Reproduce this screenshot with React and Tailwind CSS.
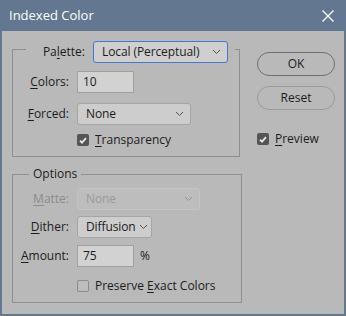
import React from 'react';

const font = { fontFamily: '"Open Sans", "Noto Sans", sans-serif' };

const Chevron = () => (
  <svg width="9" height="6" viewBox="0 0 9 6" className="shrink-0">
    <path d="M1 1l3.5 3.5L8 1" fill="none" stroke="#555" strokeWidth="1" />
  </svg>
);

const Select = ({ value, width, focused, disabled }) => (
  <div
    className={`h-[22px] flex items-center justify-between gap-[3px] pl-[8px] pr-[6px] rounded-[3px] border whitespace-nowrap ${
      focused ? 'border-[#3d7bd0] bg-[#cfcfcf]' : disabled ? 'border-[#c4c4c4] bg-[#bdbdbd]' : 'border-[#a5a5a5] bg-[#cdcdcd]'
    } ${disabled ? 'text-[#9a9a9a]' : 'text-[#1c1c1c]'}`}
    style={{ width }}
  >
    <span className="tracking-[-0.1px]">{value}</span>
    <span className={disabled ? 'opacity-40' : ''}><Chevron /></span>
  </div>
);

const Input = ({ value }) => (
  <div className="h-[22px] w-[57px] flex items-center pl-[5px] border border-[#a0a0a0] bg-[#d2d2d2] text-[#1c1c1c]">
    {value}
  </div>
);

const Check = ({ checked }) =>
  checked ? (
    <div className="w-[12px] h-[12px] rounded-[2px] bg-[#555555] flex items-center justify-center">
      <svg width="8" height="7" viewBox="0 0 8 7">
        <path d="M1 3.6l2 2L7 1.2" fill="none" stroke="#e8e8e8" strokeWidth="1.8" />
      </svg>
    </div>
  ) : (
    <div className="w-[12px] h-[12px] rounded-[2px] border border-[#8a8a8a] bg-[#bcbcbc]" />
  );

const Label = ({ pre, u, post, disabled }) => (
  <span className={`whitespace-nowrap ${disabled ? 'text-[#8c8c8c]' : 'text-[#1c1c1c]'}`}>
    {pre}
    <span className="underline underline-offset-2">{u}</span>
    {post}
  </span>
);

const Row = ({ label, children, className = '' }) => (
  <div className={`flex items-center h-[22px] ${className}`}>
    <div className="w-[57px] text-right pr-[1px]">{label}</div>
    <div className="ml-[7px] flex items-center">{children}</div>
  </div>
);

export default function App() {
  return (
    <div className="w-[346px] h-[316px] bg-[#637790] text-[12px] flex flex-col" style={font}>
      {/* Title bar */}
      <div className="h-[31px] flex items-center justify-between pl-[9px] pr-[12px] text-white text-[13px]">
        <span>Indexed Color</span>
        <svg width="12" height="12" viewBox="0 0 12 12">
          <path d="M0.5 0.5l11 11M11.5 0.5l-11 11" stroke="#fff" strokeWidth="1.3" />
        </svg>
      </div>

      {/* Body */}
      <div className="flex-1 mx-[2px] mb-[2px] bg-[#b9b9b9] flex">
        <div className="pl-[10px] pt-[18px] flex flex-col">
          {/* Palette group */}
          <div className="w-[228px] h-[108px] border border-[#8f8f8f] flex flex-col">
            <div className="flex items-center h-[22px] -mt-[9px] ml-[13px] mr-[4px] bg-[#b9b9b9]">
              <div className="w-[60px] text-right pr-[1px]">
                <Label pre="Pa" u="l" post="ette:" />
              </div>
              <div className="ml-[7px]">
                <Select value="Local (Perceptual)" width="135px" focused />
              </div>
            </div>
            <Row label={<Label u="C" post="olors:" />} className="mt-[8px]">
              <Input value="10" />
            </Row>
            <Row label={<Label u="F" post="orced:" />} className="mt-[10px]">
              <Select value="None" width="114px" />
            </Row>
            <div className="flex items-center h-[14px] mt-[8px] ml-[64px] gap-[6px]">
              <Check checked />
              <Label u="T" post="ransparency" />
            </div>
          </div>

          {/* Options group */}
          <div className="w-[230px] h-[129px] mt-[17px] border border-[#8f8f8f] flex flex-col">
            <div className="h-[16px] -mt-[9px] ml-[16px] px-[4px] w-fit bg-[#b9b9b9] flex items-center text-[#1c1c1c]">
              Options
            </div>
            <Row label={<Label u="M" post="atte:" disabled />} className="mt-[6px]">
              <Select value="None" width="123px" disabled />
            </Row>
            <Row label={<Label u="D" post="ither:" />} className="mt-[6px]">
              <Select value="Diffusion" width="75px" />
            </Row>
            <Row label={<Label u="A" post="mount:" />} className="mt-[7px]">
              <Input value="75" />
              <span className="ml-[6px] text-[#1c1c1c]">%</span>
            </Row>
            <div className="flex items-center h-[14px] mt-[12px] ml-[64px] gap-[6px]">
              <Check />
              <Label pre="Preserve " u="E" post="xact Colors" />
            </div>
          </div>
        </div>

        {/* Buttons */}
        <div className="ml-[15px] pt-[21px] flex flex-col">
          <div className="w-[78px] h-[24px] rounded-full border border-[#707070] flex items-center justify-center text-[#1c1c1c]">
            OK
          </div>
          <div className="w-[78px] h-[24px] mt-[10px] rounded-full border border-[#9a9a9a] flex items-center justify-center text-[#1c1c1c]">
            Reset
          </div>
          <div className="flex items-center h-[14px] mt-[22px] gap-[6px]">
            <Check checked />
            <Label u="P" post="review" />
          </div>
        </div>
      </div>
    </div>
  );
}
